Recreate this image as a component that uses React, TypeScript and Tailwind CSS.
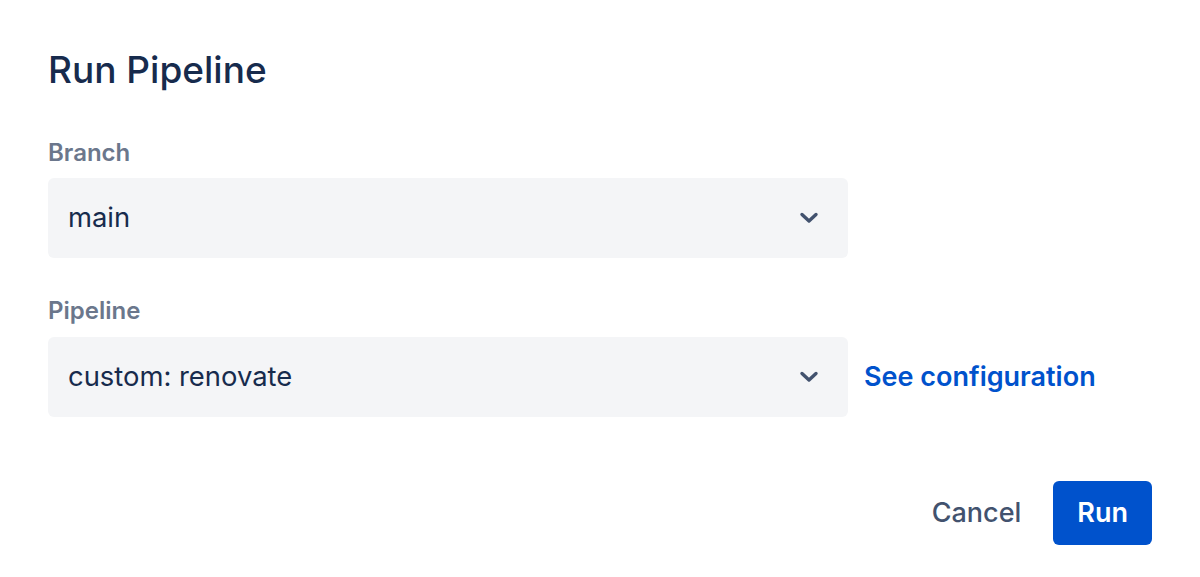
import React from "react";

function Chevron() {
  return (
    <svg width="20" height="14" viewBox="0 0 20 14" className="shrink-0">
      <polyline
        points="3,3.5 10,10 17,3.5"
        fill="none"
        stroke="#42526E"
        strokeWidth="3.4"
        strokeLinecap="round"
        strokeLinejoin="round"
      />
    </svg>
  );
}

function Select({ value }: { value: string }) {
  return (
    <div className="flex h-[80px] w-[800px] items-center justify-between rounded-[6px] bg-[#F4F5F7] pl-[20px] pr-[29px]">
      <span className="text-[27.4px] text-[#172B4D]">{value}</span>
      <Chevron />
    </div>
  );
}

export default function App() {
  return (
    <div
      className="h-[577px] w-[1200px] bg-white px-[48px] pt-[46px]"
      style={{ fontFamily: "Inter, 'Noto Sans', sans-serif" }}
    >
      <h1 className="text-[37px] font-medium leading-[48px] text-[#172B4D]">
        Run Pipeline
      </h1>
      <div className="mt-[43px] text-[24px] font-semibold leading-[32px] text-[#6B778C]">
        Branch
      </div>
      <div className="mt-[9px]">
        <Select value="main" />
      </div>
      <div className="mt-[37px] text-[24px] font-semibold leading-[32px] text-[#6B778C]">
        Pipeline
      </div>
      <div className="mt-[10px] flex items-center gap-[16px]">
        <Select value="custom: renovate" />
        <a className="text-[27px] font-semibold text-[#0052CC]">See configuration</a>
      </div>
      <div className="mt-[64px] flex w-[1104px] items-center justify-end gap-[16px]">
        <button className="flex h-[64px] items-center px-[16px] text-[27px] font-medium text-[#42526E]">
          Cancel
        </button>
        <button className="flex h-[64px] items-center rounded-[6px] bg-[#0052CC] px-[24px] text-[27px] font-semibold text-white">
          Run
        </button>
      </div>
    </div>
  );
}
